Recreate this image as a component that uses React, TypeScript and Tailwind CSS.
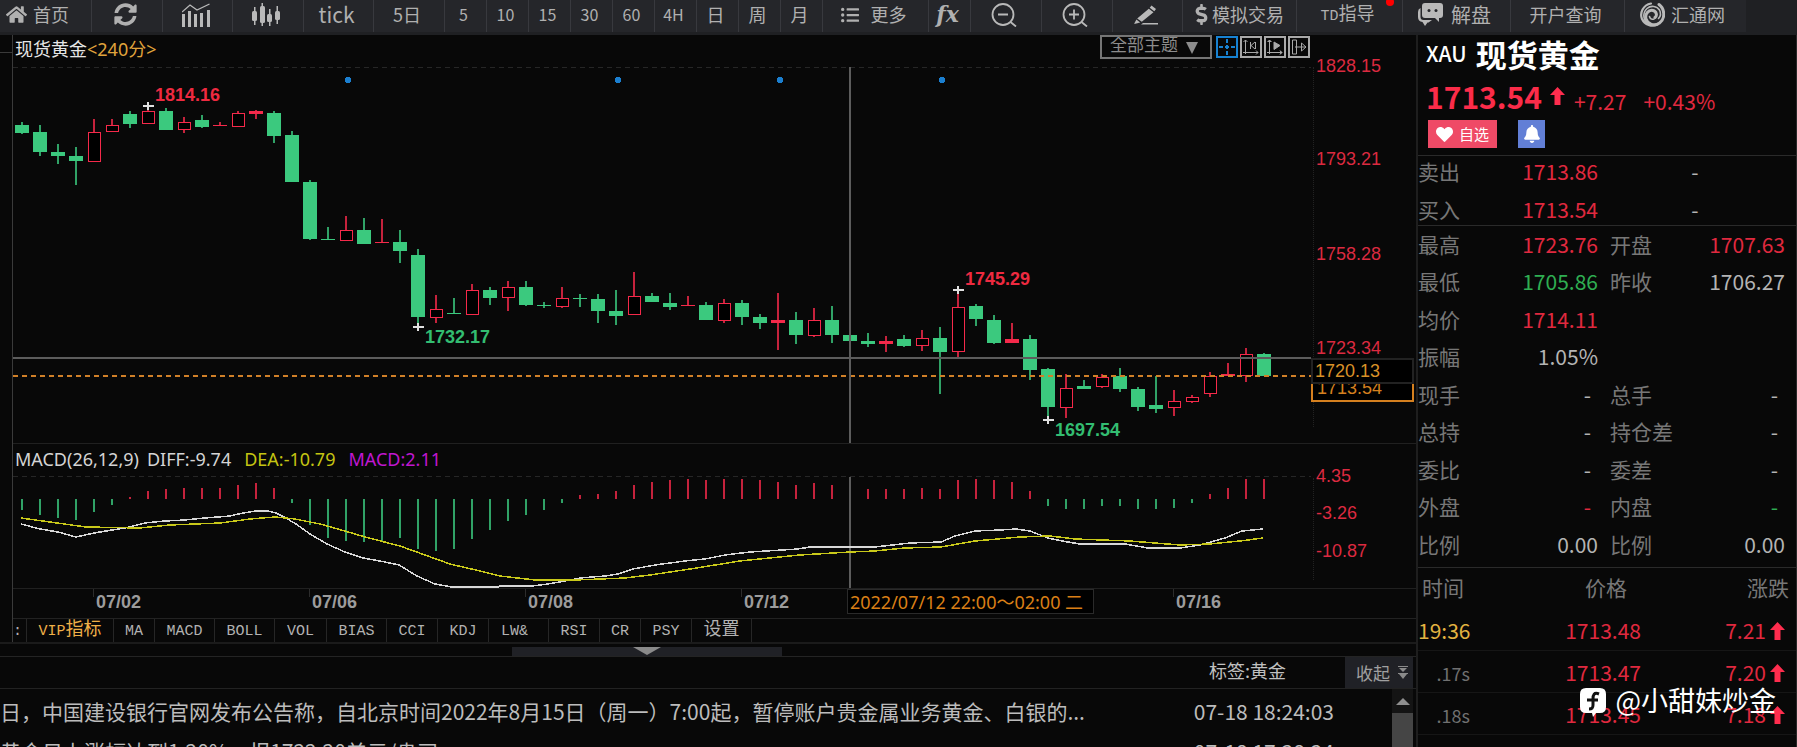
import { FC, ReactNode } from "react";
import { FaBell, FaDollarSign, FaHeart, FaHome, FaListUl, FaSyncAlt } from "react-icons/fa";

const UP = "#f5294a";
const DOWN = "#3bc97e";

// plot area, in chart units
const PLOT_X = 13;
const PLOT_W = 1298;
const PRICE_Y = 63;
const MACD_Y = 474;

const leftOf = (x: number) => `${((x - PLOT_X) / PLOT_W) * 100}%`;
const candleX = (i: number) => 22 + i * 18;

// kind (g = down, r = up, s = up with a solid body), high, body top, body bottom, low
type Candle = ["g" | "r" | "s", number, number, number, number];

const candles: Candle[] = [
    ["g", 122, 125, 133, 134], ["g", 125, 132, 152, 156], ["g", 144, 152, 156, 164], ["g", 147, 156, 161, 185],
    ["r", 119, 132, 161, 161], ["r", 119, 125, 131, 131], ["g", 111, 114, 124, 128], ["r", 105, 111, 123, 123],
    ["g", 108, 111, 130, 130], ["r", 117, 122, 129, 133], ["g", 115, 120, 127, 128], ["s", 122, 125, 126, 126],
    ["r", 111, 113, 126, 126], ["s", 110, 111, 114, 119], ["g", 111, 113, 136, 143], ["g", 131, 135, 182, 182],
    ["g", 180, 182, 239, 240], ["g", 227, 239, 240, 240], ["r", 216, 230, 240, 240], ["g", 218, 230, 244, 244],
    ["s", 219, 242, 243, 243], ["g", 230, 242, 251, 263], ["g", 249, 255, 317, 324], ["r", 295, 309, 317, 323],
    ["g", 298, 313, 314, 314], ["r", 284, 290, 314, 314], ["g", 287, 290, 298, 305], ["r", 281, 287, 297, 311],
    ["g", 281, 287, 305, 306], ["g", 302, 305, 306, 308], ["r", 287, 298, 306, 308], ["g", 294, 298, 299, 307],
    ["g", 294, 299, 311, 323], ["g", 290, 311, 316, 325], ["r", 272, 296, 314, 314], ["g", 293, 296, 302, 302],
    ["g", 293, 303, 307, 310], ["s", 296, 305, 306, 306], ["g", 302, 305, 320, 320], ["r", 299, 303, 320, 323],
    ["g", 300, 303, 317, 325], ["g", 314, 317, 323, 329], ["s", 293, 320, 323, 350], ["g", 312, 320, 335, 344],
    ["r", 308, 320, 335, 337], ["g", 306, 320, 335, 343], ["g", 335, 335, 341, 341], ["g", 333, 341, 344, 347],
    ["s", 336, 341, 344, 352], ["g", 335, 339, 346, 347], ["r", 330, 338, 345, 351], ["g", 327, 338, 352, 394],
    ["r", 292, 307, 351, 358], ["g", 304, 306, 319, 326], ["g", 315, 320, 343, 344], ["s", 323, 339, 343, 343],
    ["g", 335, 339, 370, 380], ["g", 368, 369, 407, 418], ["r", 374, 388, 407, 418], ["g", 380, 386, 389, 389],
    ["r", 374, 377, 386, 388], ["g", 368, 376, 389, 392], ["g", 387, 389, 407, 411], ["g", 376, 405, 409, 413],
    ["r", 390, 401, 407, 416], ["r", 395, 397, 401, 403], ["r", 372, 376, 393, 397], ["s", 363, 374, 376, 376],
    ["r", 348, 354, 375, 382], ["g", 353, 354, 376, 376],
];

// bar tips, zero line at 499
const macdBars = [
    510, 515, 518, 520, 512, 505, 497, 491, 489, 488, 488, 488, 485, 483, 488, 503, 525, 538, 541, 542, 541, 538, 549,
    551, 549, 539, 530, 521, 515, 510, 503, 495, 494, 491, 485, 482, 480, 479, 480, 479, 479, 480, 482, 485, 483, 485,
    499, 489, 489, 489, 488, 489, 480, 479, 480, 482, 491, 506, 509, 509, 506, 506, 509, 509, 508, 503, 494, 488, 479,
    479,
];

const diffLine =
    "21,524 40,529 58,532 76,537 94,533 112,530 125,528 145,523 165,521 185,520 205,518 230,516 243,513 256,511 268,511 276,513 284,517 296,524 310,534 327,544 345,552 363,558 385,562 399,565 417,576 435,584 452,587 498,587 500,586 532,586 548,584 565,581 580,578 592,577 606,576 618,574 633,569 655,565 685,561 705,559 725,555 750,552 798,549 810,547 875,547 910,543 941,542 955,536 975,531 1000,530 1016,529 1030,531 1048,538 1062,541 1080,544 1125,544 1148,548 1180,548 1200,545 1225,538 1242,531 1263,529";
const deaLine =
    "21,518 50,522 86,527 140,528 170,525 220,523 250,519 275,517 295,519 320,524 345,531 365,537 400,546 425,555 450,564 480,571 500,576 535,580 575,580 625,578 650,575 690,569 740,561 770,558 800,555 850,552 875,551 905,548 941,547 975,541 1020,537 1050,536 1075,539 1130,541 1180,545 1210,544 1240,541 1263,538";

const callouts = [
    { text: "1814.16", x: 155, y: 95, markX: 148, markY: 106, up: true },
    { text: "1732.17", x: 425, y: 337, markX: 418, markY: 327, up: false },
    { text: "1745.29", x: 965, y: 279, markX: 958, markY: 290, up: true },
    { text: "1697.54", x: 1055, y: 430, markX: 1048, markY: 420, up: false },
];

const priceTicks = [
    { text: "1828.15", y: 66 },
    { text: "1793.21", y: 159 },
    { text: "1758.28", y: 254 },
    { text: "1723.34", y: 348 },
];

const macdTicks = [
    { text: "4.35", y: 476 },
    { text: "-3.26", y: 513 },
    { text: "-10.87", y: 551 },
];

const dates = [
    { text: "07/02", x: 93 },
    { text: "07/06", x: 309 },
    { text: "07/08", x: 525 },
    { text: "07/12", x: 741 },
    { text: "07/16", x: 1173 },
];

const tabs = [
    { text: "MA", width: "w-[41px]" },
    { text: "MACD", width: "w-[60px]" },
    { text: "BOLL", width: "w-[60px]" },
    { text: "VOL", width: "w-[52px]" },
    { text: "BIAS", width: "w-[60px]" },
    { text: "CCI", width: "w-[51px]" },
    { text: "KDJ", width: "w-[51px]" },
    { text: "LW&", width: "w-[60px] pr-2" },
    { text: "RSI", width: "w-[51px]" },
    { text: "CR", width: "w-[41px]" },
    { text: "PSY", width: "w-[51px]" },
];

const quotes = [
    ["最高", "1723.76", "up", "开盘", "1707.63", "up"],
    ["最低", "1705.86", "down", "昨收", "1706.27", "flat"],
    ["均价", "1714.11", "up", "", "", ""],
    ["振幅", "1.05%", "flat", "", "", ""],
    ["现手", "-", "flat", "总手", "-", "flat"],
    ["总持", "-", "flat", "持仓差", "-", "flat"],
    ["委比", "-", "flat", "委差", "-", "flat"],
    ["外盘", "-", "up", "内盘", "-", "down"],
    ["比例", "0.00", "flat", "比例", "0.00", "flat"],
];

const ticks = [
    { time: "19:36", price: "1713.48", change: "7.21" },
    { time: ".17s", price: "1713.47", change: "7.20" },
    { time: ".18s", price: "1713.45", change: "7.18" },
];

const news = [
    { text: "日，中国建设银行官网发布公告称，自北京时间2022年8月15日（周一）7:00起，暂停账户贵金属业务黄金、白银的...", time: "07-18 18:24:03" },
    { text: "黄金日上涨幅达到1.20%，报1722.20美元/盎司", time: "07-18 17:38:24" },
];

const toneClass = (tone: string) =>
    tone === "up" ? "text-[#e0293f]" : tone === "down" ? "text-[#2fae52]" : "text-[#b4b4b4]";

const ToolButton: FC<{ width: string; children: ReactNode }> = ({ width, children }) => (
    <button
        type="button"
        className={`relative flex h-8 shrink-0 items-center justify-center border-r border-[#38393e] bg-[#25262a] pr-1 pb-[3px] ${width}`}
    >
        {children}
    </button>
);

const UpArrow: FC<{ className?: string }> = ({ className }) => (
    <svg viewBox="0 0 15 18" className={`h-[18px] w-[15px] ${className ?? ""}`} fill="#ff2d4e">
        <path d="M7.500 0 15 8h-4.500v10h-6V8H0z" />
    </svg>
);

const TrendIcon: FC = () => (
    <svg viewBox="0 0 28 24" className="h-6 w-7" fill="#b9b9b9">
        <path d="M0 11h3v13H0zM6 8h3v16H6zM12 11h3v13h-3zM18 10h3v14h-3zM25 7h3v17h-3z" />
        <path d="M0 9 8 2l7 5L27.500 1" fill="none" stroke="#b9b9b9" strokeWidth="1.300" />
    </svg>
);

const CandlesIcon: FC = () => (
    <svg viewBox="0 0 28 24" className="h-6 w-7" fill="#b9b9b9">
        <path d="M2 4h1.500v18H2zM9.500 0H11v23H9.500zM17 6h1.500v17H17zM24.500 3H26v18h-1.500z" />
        <rect x="0" y="8" width="5" height="10" rx="1.500" />
        <rect x="8" y="3" width="5" height="17" rx="1.500" />
        <rect x="15" y="11" width="5" height="8" rx="1.500" />
        <rect x="23" y="8" width="5" height="9" rx="1.500" />
    </svg>
);

const ZoomIcon: FC<{ plus?: boolean }> = ({ plus }) => (
    <svg viewBox="0 0 26 24" className="h-6 w-[26px]" fill="none" stroke="#b9b9b9" strokeWidth="1.800">
        <circle cx="12" cy="11.500" r="10.500" />
        <path d="m19.500 19 5.500 4.500M7 11.500h10" />
        {plus && <path d="M12 6.500v10" />}
    </svg>
);

const PencilIcon: FC = () => (
    <svg viewBox="0 0 24 20" className="h-5 w-6" fill="#b9b9b9">
        <path d="M17.500 0.500 22 4l-1.700 2.200-4.600-3.400zM14.800 3.700l4.700 3.500L7.800 16.800 3.200 13.500zM2.400 14.500l3.800 3L0 19z" />
        <path d="M9 18h15v1.500H7z" />
    </svg>
);

const ChatIcon: FC = () => (
    <svg viewBox="0 0 25 23" className="h-[23px] w-[25px]" fill="#b9b9b9">
        <path d="M7 0h15q3 0 3 3v9q0 3-3 3h-1v4l-4-4H7q-3 0-3-3V3q0-3 3-3z" />
        <path d="M2.500 5v9q0 3 3 3h8.500l-3.500 2.500h-1L7 23l-2.500-4Q0 18.500 0 14V9q0-3 2.500-4z" />
        <circle cx="11" cy="7.500" r="1.500" fill="#25262a" />
        <circle cx="18" cy="7.500" r="1.500" fill="#25262a" />
    </svg>
);

const SwirlIcon: FC = () => (
    <svg viewBox="0 0 26 26" className="h-[26px] w-[26px]" fill="none" stroke="#b9b9b9" strokeLinecap="round">
        <path d="M12 1.500C4 3 .500 11 3 17c2.500 5.500 10 8.500 15.500 5.500" strokeWidth="2.200" />
        <path d="M20 2.500c6 4.500 6.500 14 .500 18.500-5 3.500-12 1.500-13.500-4-1.300-5 2.500-9.500 7-8.500 3.500.800 4.500 5 2 7" strokeWidth="3" />
        <path d="M11 23C4 20 3 11 8 6.500c4-3.500 10-2.500 12.500 1.500 1.500 3 1 6.500-1 8.500M10.500 14.500q1 3.500 4.500 2.500" strokeWidth="1.600" />
    </svg>
);

const Toolbar: FC = () => (
    <nav className="flex h-[35px] shrink-0 items-start overflow-hidden bg-[#1f2023] text-lg leading-[27px] text-[#b0b0b0]">
        <a href="#" className="flex h-8 w-[92px] shrink-0 items-center gap-[6px] border-r border-[#38393e] bg-[#25262a] pb-[3px] pl-[6px]">
            <FaHome size={21} />
            首页
        </a>
        <ToolButton width="w-[71px]"><FaSyncAlt size={23} /></ToolButton>
        <ToolButton width="w-[70px]"><TrendIcon /></ToolButton>
        <ToolButton width="w-[71px]"><CandlesIcon /></ToolButton>
        <ToolButton width="w-[70px]"><span className="text-[21px]">tick</span></ToolButton>
        <ToolButton width="w-[71px]">5日</ToolButton>
        {["5", "10", "15", "30", "60", "4H"].map((t) => (
            <ToolButton key={t} width="w-[42px]"><span className="text-base leading-[27px]">{t}</span></ToolButton>
        ))}
        {["日", "周", "月"].map((t) => (
            <ToolButton key={t} width="w-[42px]">{t}</ToolButton>
        ))}
        <ToolButton width="w-[106px]">
            <FaListUl size={18} className="mr-3" />
            更多
        </ToolButton>
        <ToolButton width="w-[42px]">
            <span className="font-['DejaVu_Serif','Liberation_Serif',serif] text-[22px] font-bold italic">fx</span>
        </ToolButton>
        <ToolButton width="w-[71px]"><ZoomIcon /></ToolButton>
        <ToolButton width="w-[71px]"><ZoomIcon plus /></ToolButton>
        <ToolButton width="w-[70px]"><PencilIcon /></ToolButton>
        <ToolButton width="w-[114px]">
            <FaDollarSign size={21} />
            模拟交易
        </ToolButton>
        <ToolButton width="w-[106px]">
            <span>
                <span className="font-['Liberation_Mono',monospace] text-[15px]">TD</span>指导
            </span>
            <span className="absolute -top-0.5 right-2 h-2 w-2 rounded-full bg-[#ff0000]" />
        </ToolButton>
        <ToolButton width="w-[108px]">
            <ChatIcon />
            <span className="ml-2 text-xl">解盘</span>
        </ToolButton>
        <ToolButton width="w-[114px]">开户查询</ToolButton>
        <a href="#" className="flex h-8 w-[121px] shrink-0 items-center gap-[6px] bg-[#25262a] pb-[3px] pl-[14px]">
            <SwirlIcon />
            汇通网
        </a>
    </nav>
);

const chartTools = [
    {
        label: "十字光标",
        color: "border-[#1782d2] text-[#1782d2]",
        icon: <path d="M9 1v4M9 7v4M9 13v4M1 9h4M7 9h4M13 9h4" strokeWidth="2" />,
    },
    {
        label: "横向缩放",
        color: "border-[#a8a8a8] text-[#a8a8a8]",
        icon: <path d="M3.500 2v14M1 14.500h15M1.500 4l2-2 2 2M14 12.500l2 2-2 2M8.500 4v7M13.500 4v7M13 4l-4 3.500 4 3.500" />,
    },
    {
        label: "播放",
        color: "border-[#a8a8a8] text-[#a8a8a8]",
        icon: <path d="M3.500 2v14M1 14.500h15M1.500 4l2-2 2 2M14 12.500l2 2-2 2M8 4v7.500l6-4z" fill="currentColor" />,
    },
    {
        label: "右移",
        color: "border-[#a8a8a8] text-[#a8a8a8]",
        icon: <path d="M2.500 2h4v14h-4zM5 9h11M11.500 5v8l4.500-4z" fill="none" />,
    },
];

const PriceChart: FC = () => (
    <section className="border-b border-[#202020]">
        <div className="flex h-7 items-start justify-between pr-[106px] pl-0.5 text-lg leading-[26px]">
            <h1 className="text-[#e6e6e6]">
                现货黄金<span className="font-['Noto_Sans','Noto_Sans_CJK_SC',sans-serif] text-[#e0a43c]">&lt;240分&gt;</span>
            </h1>
            <div className="flex items-start gap-0.5">
                <div className="relative mr-0.5 h-6">
                    <select
                        aria-label="主题"
                        className="block h-6 w-[112px] appearance-none border-2 border-[#757575] bg-[#080808] pb-1 pl-2 font-['Noto_Sans','Noto_Sans_CJK_SC',sans-serif] text-[17px] leading-4 text-[#8c8c8c]"
                    >
                        <option>全部主题</option>
                    </select>
                    <svg viewBox="0 0 12 12" className="pointer-events-none absolute top-[7px] right-[14px] h-3 w-3" fill="#8c8c8c">
                        <path d="M0 0h12L6 12z" />
                    </svg>
                </div>
                {chartTools.map((tool) => (
                    <button
                        key={tool.label}
                        type="button"
                        aria-label={tool.label}
                        className={`mt-px h-[22px] w-[22px] border-2 ${tool.color}`}
                    >
                        <svg viewBox="0 0 18 18" className="block h-[18px] w-[18px]" fill="none" stroke="currentColor">
                            {tool.icon}
                        </svg>
                    </button>
                ))}
            </div>
        </div>
        <div className="flex h-[380px] font-['Liberation_Sans',Arial,sans-serif] text-lg">
            <div className="relative min-w-0 flex-1">
                <svg
                    viewBox={`${PLOT_X} ${PRICE_Y} ${PLOT_W} 380`}
                    preserveAspectRatio="none"
                    className="block h-full w-full"
                    shapeRendering="crispEdges"
                >
                    <path d="M13 67.500H1311" stroke="#262626" strokeDasharray="5 4" />
                    {[348, 618, 780, 942].map((x) => (
                        <circle key={x} cx={x} cy="80" r="3" fill="#1b7fd0" />
                    ))}
                    {candles.map(([kind, high, top, bottom, low], i) => {
                        const x = candleX(i);
                        const color = kind === "g" ? DOWN : UP;
                        return (
                            <g key={i}>
                                <rect x={x - 1} y={high} width="2" height={low - high} fill={color} opacity="0.8" />
                                {kind === "r" ? (
                                    <rect x={x - 6} y={top + 0.5} width="12" height={Math.max(bottom - top, 1)} fill="#000" stroke={color} />
                                ) : (
                                    <rect x={x - 7} y={top} width="14" height={Math.max(bottom - top, 1)} fill={color} />
                                )}
                            </g>
                        );
                    })}
                    <path d="M13 376H1311" stroke="#d08028" strokeDasharray="5 4" strokeWidth="2" />
                    <path d="M13 358H1311M850 67V443" stroke="#5c5c5c" strokeWidth="2" />
                    {callouts.map((c) => (
                        <path
                            key={c.text}
                            d={`M${c.markX - 5} ${c.markY}h11M${c.markX} ${c.markY - 4}v8`}
                            stroke="#e0e0e0"
                            strokeWidth="2"
                        />
                    ))}
                </svg>
                {callouts.map((c) => (
                    <span
                        key={c.text}
                        className={`absolute -translate-y-1/2 leading-5 font-bold ${c.up ? "text-[#ee2a40]" : "text-[#33bd71]"}`}
                        style={{ left: leftOf(c.x), top: c.y - PRICE_Y }}
                    >
                        {c.text}
                    </span>
                ))}
            </div>
            <div className="relative w-[105px] shrink-0 text-[#dc2a40]">
                <div className="absolute top-1 bottom-4 left-0.5 border-l border-dotted border-[#222]" />
                {priceTicks.map((t) => (
                    <span key={t.text} className="absolute left-[5px] -translate-y-1/2 leading-5" style={{ top: t.y - PRICE_Y }}>
                        {t.text}
                    </span>
                ))}
                <div
                    className="absolute left-0 flex h-11 w-[103px] items-end border-2 border-[#d5801f] bg-black pb-[2px] pl-1 leading-5 text-[#d5801f]"
                    style={{ top: 358 - PRICE_Y }}
                >
                    1713.54
                </div>
                <div
                    className="absolute left-0 flex h-[26px] w-[103px] items-center border-2 border-[#222] bg-black pl-0.5 text-[#d99128]"
                    style={{ top: 358 - PRICE_Y }}
                >
                    1720.13
                </div>
            </div>
        </div>
    </section>
);

const MacdChart: FC = () => (
    <section className="border-b border-[#202020]">
        <div className="flex h-[30px] items-center pl-0.5 font-['Noto_Sans','Noto_Sans_CJK_SC',sans-serif] text-lg text-[#d4d4d4]">
            <span className="mr-[8px]">MACD(26,12,9)</span>
            <span className="mr-[13px]">DIFF:-9.74</span>
            <span className="mr-[13px] text-[#c4c412]">DEA:-10.79</span>
            <span className="text-[#c017d0]">MACD:2.11</span>
        </div>
        <div className="flex h-[114px]">
            <svg
                viewBox={`${PLOT_X} ${MACD_Y} ${PLOT_W} 114`}
                preserveAspectRatio="none"
                className="block h-full min-w-0 flex-1"
                shapeRendering="crispEdges"
            >
                <path d="M13 476.500H1311" stroke="#262626" strokeDasharray="5 4" />
                {macdBars.map((y, i) => (
                    <rect
                        key={i}
                        x={candleX(i) - 1}
                        y={Math.min(y, 499)}
                        width="2"
                        height={Math.abs(y - 499)}
                        fill={y > 499 ? DOWN : UP}
                        opacity="0.8"
                    />
                ))}
                <path d="M850 477V588" stroke="#5c5c5c" strokeWidth="2" />
                <polyline points={diffLine} fill="none" stroke="#d8d8d8" strokeWidth="1.500" />
                <polyline points={deaLine} fill="none" stroke="#c9c91a" strokeWidth="1.500" />
            </svg>
            <div className="relative w-[105px] shrink-0 font-['Liberation_Sans',Arial,sans-serif] text-lg text-[#dc2a40]">
                <div className="absolute top-1 bottom-2 left-0.5 border-l border-dotted border-[#222]" />
                {macdTicks.map((t) => (
                    <span key={t.text} className="absolute left-[5px] -translate-y-1/2 leading-5" style={{ top: t.y - MACD_Y }}>
                        {t.text}
                    </span>
                ))}
            </div>
        </div>
    </section>
);

const DateAxis: FC = () => (
    <div className="h-[30px] border-b border-[#222] pr-[105px]">
        <div className="relative h-full">
            {dates.map((d) => (
                <span
                    key={d.text}
                    className="absolute top-0 flex h-2 border-l border-[#2c2c2c] pl-[2px] font-['Liberation_Sans',Arial,sans-serif] text-lg leading-[26px] font-bold text-[#9c9c9c]"
                    style={{ left: leftOf(d.x) }}
                >
                    {d.text}
                </span>
            ))}
            <span
                className="absolute top-0 flex h-[25px] w-[247px] items-center border border-[#2a2a2a] bg-black pl-0.5 font-['Noto_Sans','Noto_Sans_CJK_SC',sans-serif] text-lg whitespace-nowrap text-[#d97f16]"
                style={{ left: leftOf(847) }}
            >
                2022/07/12 22:00～02:00 二
            </span>
        </div>
    </div>
);

const IndicatorTabs: FC = () => (
    <div className="flex h-[23px] font-['Liberation_Mono','Noto_Sans_CJK_SC',monospace] text-[15px] leading-[25px] text-[#b2b2b2]">
        <span className="w-[14px] shrink-0 border-r border-[#262626]">:</span>
        <button type="button" className="w-[87px] shrink-0 border-r border-[#262626] text-[#f0b048]">
            VIP<span className="text-lg leading-[23px]">指标</span>
        </button>
        {tabs.map((t) => (
            <button key={t.text} type="button" className={`shrink-0 border-r border-[#262626] ${t.width}`}>
                {t.text}
            </button>
        ))}
        <button type="button" className="w-[60px] shrink-0 border-r border-[#262626] text-lg leading-[23px]">设置</button>
    </div>
);

const NewsPanel: FC = () => (
    <section className="flex min-h-0 flex-1 flex-col border-t-2 border-[#1b1b1b] pt-[3px]">
        <div className="flex h-[10px] shrink-0 justify-center border-b border-[#242424] pr-[122px]">
            <button type="button" aria-label="收起图表" className="flex h-[9px] w-[270px] justify-center bg-[#202126]">
                <svg viewBox="0 0 28 8" className="h-2 w-7" fill="#8a8a8a">
                    <path d="M0 0h28L14 8z" />
                </svg>
            </button>
        </div>
        <div className="flex h-8 shrink-0 items-start justify-end border-b border-[#222] pr-[3px] text-lg leading-[26px] text-[#c0c0c0]">
            <span className="mr-[59px]">标签:黄金</span>
            <button type="button" className="flex h-[31px] w-[68px] items-center justify-end gap-2 bg-[#202126] pr-[5px] text-[17px] text-[#a0a0a0]">
                收起
                <svg viewBox="0 0 10 13" className="h-[13px] w-[10px]" fill="#8a8a8a">
                    <path d="M0 0h10v1H0zM1 2h8L5 6zM0 7h10v1H0zM1 8h8l-4 5z" />
                </svg>
            </button>
        </div>
        <div className="flex min-h-0 flex-1 pr-[3px]">
            <ul className="min-w-0 flex-1 overflow-hidden pt-0.5 text-[21px] text-[#bcbcbc]">
                {news.map((n) => (
                    <li key={n.time} className="flex h-10 items-center justify-between pr-[58px] leading-10 whitespace-nowrap">
                        <a href="#" className="truncate">{n.text}</a>
                        <time>{n.time}</time>
                    </li>
                ))}
            </ul>
            <div className="flex w-[21px] shrink-0 flex-col items-center bg-[#141414]">
                <svg viewBox="0 0 14 7" className="mt-[9px] mb-2 h-[7px] w-[14px] shrink-0" fill="#8f8f8f">
                    <path d="M7 0l7 7H0z" />
                </svg>
                <div className="w-full flex-1 bg-[#454545]" />
            </div>
        </div>
    </section>
);

const QuotePanel: FC = () => (
    <aside className="w-[379px] shrink-0 overflow-hidden border-r border-[#2a2a2a] text-[21px] whitespace-nowrap">
        <header className="h-[121px] border-b border-[#2a2a2a] pl-2">
            <h2 className="flex h-[38px] items-center gap-[9px] text-white">
                <span className="font-medium">XAU</span>
                <span className="text-[31px] leading-[38px] font-bold">现货黄金</span>
            </h2>
            <div className="flex h-[46px] items-center text-[#e0293f]">
                <span className="text-[30px] leading-[44px] font-bold text-[#fb2c49]">1713.54</span>
                <UpArrow className="ml-2" />
                <span className="mt-3 ml-[9px]">+7.27</span>
                <span className="mt-3 ml-[17px]">+0.43%</span>
            </div>
            <div className="flex gap-[21px] pt-px pl-0.5 text-white">
                <button type="button" className="flex h-7 w-[69px] items-center justify-center gap-[6px] bg-[#ef4a66] text-[15px] leading-7">
                    <FaHeart size={17} />
                    自选
                </button>
                <button type="button" aria-label="提醒" className="flex h-7 w-[27px] items-center justify-center bg-[#627fd6]">
                    <FaBell size={18} />
                </button>
            </div>
        </header>
        <table className="w-full table-fixed border-collapse text-left text-[#777]">
            <colgroup>
                <col className="w-20" />
                <col className="w-[100px]" />
                <col className="w-[92px]" />
                <col />
            </colgroup>
            <tbody>
                {[["卖出", "1713.86"], ["买入", "1713.54"]].map(([label, value], i) => (
                    <tr key={label} className={`align-top leading-[30px] ${i === 1 ? "h-[31px] border-b border-[#2a2a2a]" : "h-[38px]"}`}>
                        <th className="font-normal">{label}</th>
                        <td className="text-right text-[#e0293f]">{value}</td>
                        <td colSpan={2} className="pr-1 text-center text-[#b4b4b4]">-</td>
                    </tr>
                ))}
            </tbody>
        </table>
        <table className="mb-[3px] h-[338px] w-full table-fixed border-collapse text-left text-[#777]">
            <colgroup>
                <col className="w-20" />
                <col className="w-[100px]" />
                <col className="w-[92px]" />
                <col />
            </colgroup>
            <tbody>
                {quotes.map(([label, value, tone, label2, value2, tone2]) => (
                    <tr key={label}>
                        <th className="font-normal">{label}</th>
                        <td className={`text-right ${toneClass(tone)} ${value === "-" ? "pr-[7px]" : ""}`}>{value}</td>
                        <th className="pl-3 font-normal">{label2}</th>
                        <td className={`text-right ${toneClass(tone2)} ${value2 === "-" ? "pr-[18px]" : "pr-[11px]"}`}>{value2}</td>
                    </tr>
                ))}
            </tbody>
        </table>
        <table className="w-full table-fixed border-collapse border-t border-[#2a2a2a] text-[#777]">
            <thead>
                <tr className="h-[41px]">
                    <th className="w-[52px] pl-1 text-left font-normal">时间</th>
                    <th className="pr-[14px] text-right font-normal">价格</th>
                    <th className="w-[155px] pr-[7px] text-right font-normal">涨跌</th>
                </tr>
            </thead>
            <tbody>
                {ticks.map((t, i) => (
                    <tr key={t.time} className="h-[42px] border-b border-[#161616] text-[#e0293f]">
                        <td className={`pt-1 text-right ${i === 0 ? "text-[#e3b341]" : "text-lg text-[#707070]"}`}>{t.time}</td>
                        <td className="pt-1 text-right">{t.price}</td>
                        <td className="pt-1 pr-[11px]">
                            <span className="flex items-center justify-end gap-1">
                                {t.change}
                                <UpArrow />
                            </span>
                        </td>
                    </tr>
                ))}
            </tbody>
        </table>
    </aside>
);

const Watermark: FC = () => (
    <div className="pointer-events-none absolute right-[21px] bottom-[29px] flex items-center gap-[9px] text-[27px] leading-9 text-white">
        <svg viewBox="0 0 26 29" className="mt-1 h-[29px] w-[26px]">
            <path d="M6 0h14q6 0 6 6v13q0 6-6 6h-4l-3 4-1-4H6q-6 0-6-6V6q0-6 6-6z" fill="#fff" />
            <path d="M19 6c-5-2-6 1-6 5v6c0 3-1 4-4 4M7 12h11" fill="none" stroke="#111" strokeWidth="3" />
        </svg>
        @小甜妹炒金
    </div>
);

const App: FC = () => {
    return (
        <div className="relative flex h-screen flex-col overflow-hidden bg-[#080808] font-['Noto_Sans_CJK_SC','Noto_Sans',sans-serif]">
            <Toolbar />
            <div className="flex min-h-0 flex-1">
                <main className="flex min-w-0 flex-1 flex-col border-r-2 border-[#1e1e1e]">
                    <div className="flex shrink-0">
                        <div className="w-[13px] shrink-0 border-r border-[#3a3a3a]">
                            <div className="h-[18px] border-b border-[#3a3a3a]" />
                        </div>
                        <div className="min-w-0 flex-1">
                            <PriceChart />
                            <MacdChart />
                            <DateAxis />
                            <IndicatorTabs />
                        </div>
                    </div>
                    <NewsPanel />
                </main>
                <QuotePanel />
            </div>
            <Watermark />
        </div>
    );
};

export default App;
